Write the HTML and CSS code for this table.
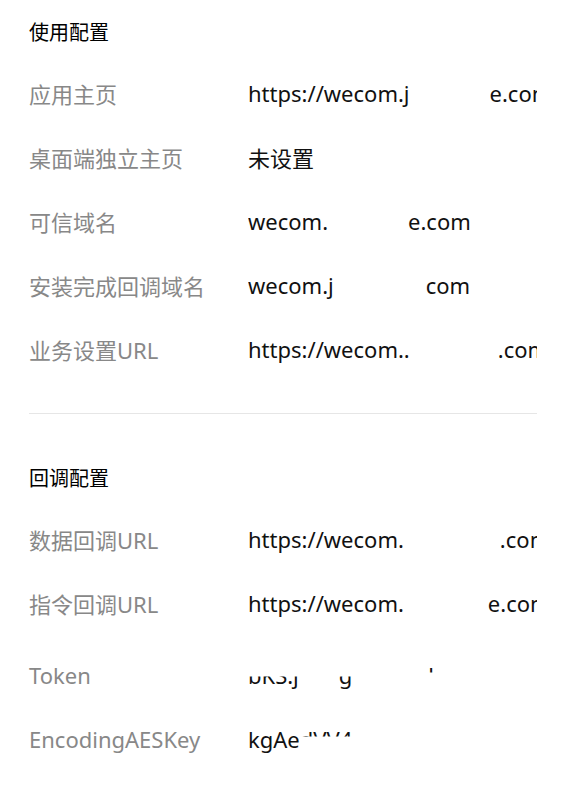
FILE: index.html
```html
<!DOCTYPE html>
<html lang="zh-CN">
<head>
    <meta charset="UTF-8">
    <meta name="viewport" content="width=device-width, initial-scale=1.0">
    <title>应用配置</title>
    <link rel="stylesheet" href="styles.css">
</head>
<body>

    <div class="config">
        <!-- 使用配置 -->
        <section class="group">
            <h3 class="group-title">使用配置</h3>
            <div class="row">
                <span class="label">应用主页</span>
                <span class="value">https://wecom.j<span class="gap w80"></span>e.com</span>
            </div>
            <div class="row">
                <span class="label">桌面端独立主页</span>
                <span class="value">未设置</span>
            </div>
            <div class="row">
                <span class="label">可信域名</span>
                <span class="value">wecom.<span class="gap w80"></span>e.com</span>
            </div>
            <div class="row">
                <span class="label">安装完成回调域名</span>
                <span class="value">wecom.j<span class="gap w92"></span>com</span>
            </div>
            <div class="row">
                <span class="label">业务设置URL</span>
                <span class="value">https://wecom..<span class="gap w88"></span>.com</span>
            </div>
        </section>

        <hr class="divider">

        <!-- 回调配置 -->
        <section class="group">
            <h3 class="group-title">回调配置</h3>
            <div class="row">
                <span class="label">数据回调URL</span>
                <span class="value">https://wecom.<span class="gap w96"></span>.com</span>
            </div>
            <div class="row">
                <span class="label">指令回调URL</span>
                <span class="value">https://wecom.<span class="gap w84"></span>e.com</span>
            </div>
            <div class="row row-token">
                <span class="label">Token</span>
                <span class="value"><span class="half-bottom">bKS.j</span><span class="gap w40"></span><span class="half-bottom">g</span><span class="gap w76"></span><span class="half-top">l</span></span>
            </div>
            <div class="row">
                <span class="label">EncodingAESKey</span>
                <span class="value">kgAe<span class="half-top">dVV4</span></span>
            </div>
        </section>
    </div>

</body>
</html>
```
FILE: styles.css
```css
body {
    margin: 0;
    padding: 0;
    background-color: #fff;
    font-family: "Noto Sans", "Noto Sans CJK SC", sans-serif;
    color: #000;
}
.config {
    width: 508px;
    padding: 20px 0 0 29px;
}
.group-title {
    margin: 0 0 15px;
    font-size: 20px;
    line-height: 26px;
    font-weight: 400;
    color: #000;
}
.row {
    display: flex;
    align-items: center;
    height: 64px;
}
.row-token {
    margin-top: 8px;
}
.label {
    flex: 0 0 219px;
    font-size: 22px;
    color: #888;
    white-space: nowrap;
}
.value {
    flex: 1;
    min-width: 0;
    overflow: hidden;
    white-space: nowrap;
    font-size: 22px;
    color: #111;
}
.gap {
    display: inline-block;
}
.w40 { width: 40px; }
.w76 { width: 76px; }
.w80 { width: 80px; }
.w84 { width: 84px; }
.w88 { width: 88px; }
.w92 { width: 92px; }
.w96 { width: 96px; }
.half-bottom {
    display: inline-block;
    clip-path: inset(55% 0 0 0);
}
.half-top {
    display: inline-block;
    clip-path: inset(0 0 58% 0);
}
.divider {
    margin: 32px 0 52px;
    border: none;
    border-top: 1px solid #e6e6e6;
}
```
